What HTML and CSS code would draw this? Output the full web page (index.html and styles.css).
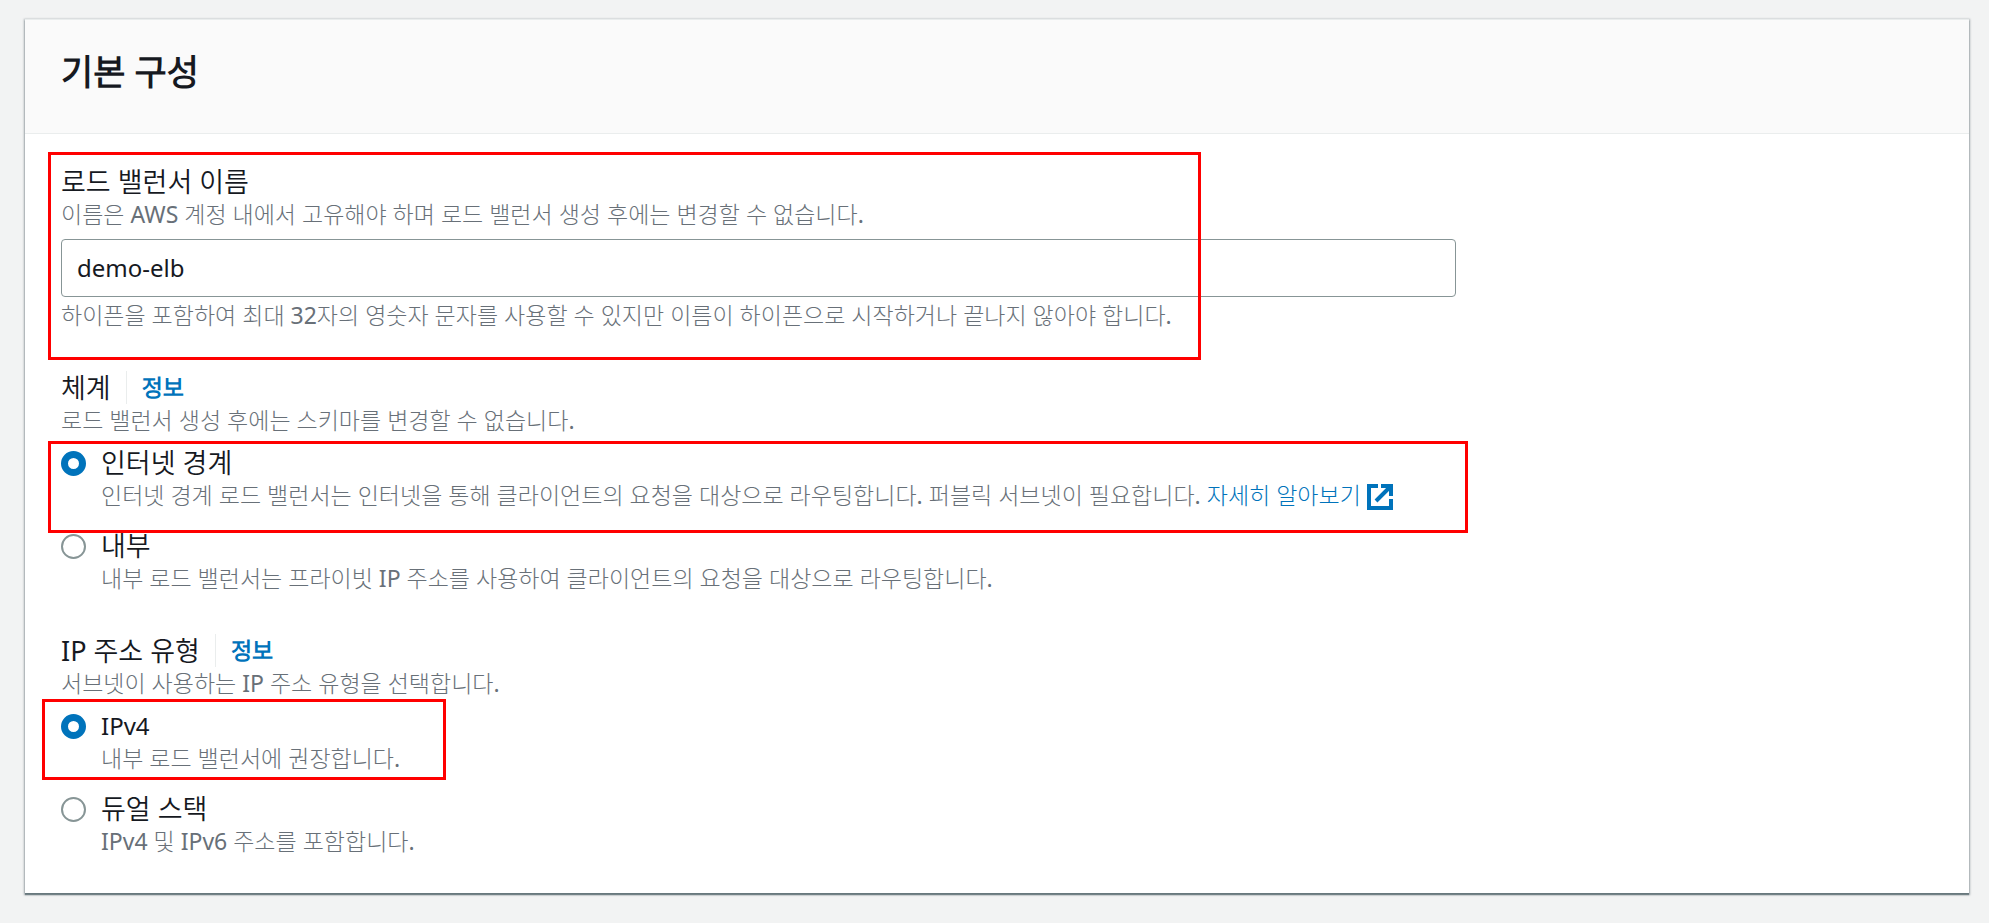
FILE: index.html
```html
<!DOCTYPE html>
<html lang="ko">
<head>
    <meta charset="UTF-8">
    <meta name="viewport" content="width=device-width, initial-scale=1.0">
    <title>기본 구성</title>
    <link rel="stylesheet" href="styles.css">
</head>
<body>
    <form class="card">
        <div class="card-header">
            <h2>기본 구성</h2>
        </div>

        <div class="card-body">
            <!-- Load balancer name -->
            <div class="field">
                <label class="label" for="lbName">로드 밸런서 이름</label>
                <p class="description">이름은 AWS 계정 내에서 고유해야 하며 로드 밸런서 생성 후에는 변경할 수 없습니다.</p>
                <input type="text" class="text-input" id="lbName" value="demo-elb">
                <p class="description">하이픈을 포함하여 최대 32자의 영숫자 문자를 사용할 수 있지만 이름이 하이픈으로 시작하거나 끝나지 않아야 합니다.</p>
                <div class="highlight highlight-name"></div>
            </div>

            <!-- Scheme -->
            <div class="field" role="radiogroup" aria-labelledby="schemeLabel">
                <div class="label-row">
                    <span class="label" id="schemeLabel">체계</span>
                    <a href="#" class="info">정보</a>
                </div>
                <p class="description">로드 밸런서 생성 후에는 스키마를 변경할 수 없습니다.</p>
                <div class="options">
                    <div class="option">
                        <input type="radio" name="scheme" id="internetFacing" checked>
                        <div class="option-text">
                            <label class="label" for="internetFacing">인터넷 경계</label>
                            <p class="description">인터넷 경계 로드 밸런서는 인터넷을 통해 클라이언트의 요청을 대상으로 라우팅합니다. 퍼블릭 서브넷이 필요합니다. <a href="#" class="learn-more">자세히 알아보기
                                <svg class="external" viewBox="0 0 26 26" aria-hidden="true">
                                    <path d="M11 2H2V24H24V15"/>
                                    <path d="M14 2H24V12M23 3L9 17"/>
                                </svg></a></p>
                        </div>
                        <div class="highlight highlight-internet"></div>
                    </div>
                    <div class="option">
                        <input type="radio" name="scheme" id="internal">
                        <div class="option-text">
                            <label class="label" for="internal">내부</label>
                            <p class="description">내부 로드 밸런서는 프라이빗 IP 주소를 사용하여 클라이언트의 요청을 대상으로 라우팅합니다.</p>
                        </div>
                    </div>
                </div>
            </div>

            <!-- IP address type -->
            <div class="field" role="radiogroup" aria-labelledby="ipLabel">
                <div class="label-row">
                    <span class="label" id="ipLabel">IP 주소 유형</span>
                    <a href="#" class="info">정보</a>
                </div>
                <p class="description">서브넷이 사용하는 IP 주소 유형을 선택합니다.</p>
                <div class="options">
                    <div class="option">
                        <input type="radio" name="ipType" id="ipv4" checked>
                        <div class="option-text">
                            <label class="label label-latin" for="ipv4">IPv4</label>
                            <p class="description">내부 로드 밸런서에 권장합니다.</p>
                        </div>
                        <div class="highlight highlight-ipv4"></div>
                    </div>
                    <div class="option">
                        <input type="radio" name="ipType" id="dualstack">
                        <div class="option-text">
                            <label class="label" for="dualstack">듀얼 스택</label>
                            <p class="description">IPv4 및 IPv6 주소를 포함합니다.</p>
                        </div>
                    </div>
                </div>
            </div>
        </div>
    </form>
</body>
</html>
```
FILE: styles.css
```css
* {
    box-sizing: border-box;
}
body {
    margin: 0;
    padding: 19px 20px 30px 25px;
    background-color: #f2f3f3;
    color: #16191f;
    font-family: "Noto Sans", "Noto Sans CJK KR DemiLight", "Noto Sans CJK KR", sans-serif;
    font-size: 23px;
    line-height: 33px;
}
/* Card */
.card {
    background-color: #fff;
    box-shadow: 0 1px 2px 1px rgba(0, 28, 36, 0.3), 0 2px 1px 0 rgba(0, 28, 36, 0.4);
}
.card-header {
    padding: 32px 36px 41px;
    background-color: #fafafa;
    border-top: 1px solid #eaeded;
    border-bottom: 1px solid #eaeded;
}
.card-header h2 {
    margin: 0;
    font-size: 35px;
    line-height: 40px;
}
.card-body {
    display: flex;
    flex-direction: column;
    gap: 39px;
    padding: 31px 36px 35px;
}
/* Form fields */
.field {
    position: relative;
}
.label {
    display: block;
    font-size: 27px;
}
.label-latin {
    font-size: 24px;
}
.description {
    margin: 0;
    color: #687078;
    font-family: "Noto Sans", "Noto Sans CJK KR Light", "Noto Sans CJK KR", sans-serif;
}
.text-input {
    display: block;
    width: calc(75% - 9px);
    height: 58px;
    margin: 8px 0 2px;
    padding: 0 15px 2px;
    border: 1px solid #879596;
    border-radius: 4px;
    color: #16191f;
    font-family: inherit;
    font-size: 24px;
}
.label-row {
    display: flex;
    gap: 15px;
}
.info {
    padding-left: 15px;
    border-left: 1px solid #eaeded;
    color: #0073bb;
    font-size: 23px;
    font-weight: bold;
    text-decoration: none;
}
/* Radio buttons */
.options {
    display: flex;
    flex-direction: column;
    gap: 17px;
    margin-top: 9px;
}
.option {
    position: relative;
    display: flex;
    gap: 15px;
}
.option input {
    appearance: none;
    flex: none;
    width: 25px;
    height: 25px;
    margin: 5px 0 0;
    border: 2px solid #879596;
    border-radius: 50%;
    background-color: #fff;
}
.option input:checked {
    border: 7px solid #0073bb;
}
.learn-more {
    color: #0073bb;
    text-decoration: none;
}
.external {
    width: 26px;
    height: 26px;
    vertical-align: -6px;
    fill: none;
    stroke: #0073bb;
    stroke-width: 4;
}
/* Red highlight frames */
.highlight {
    position: absolute;
    border: 3px solid #f00;
    pointer-events: none;
}
.highlight-name {
    top: -13px;
    left: -13px;
    width: 1153px;
    height: 208px;
}
.highlight-internet {
    top: -5px;
    left: -13px;
    width: 1420px;
    height: 92px;
}
.highlight-ipv4 {
    top: -10px;
    left: -19px;
    width: 404px;
    height: 81px;
}
```
